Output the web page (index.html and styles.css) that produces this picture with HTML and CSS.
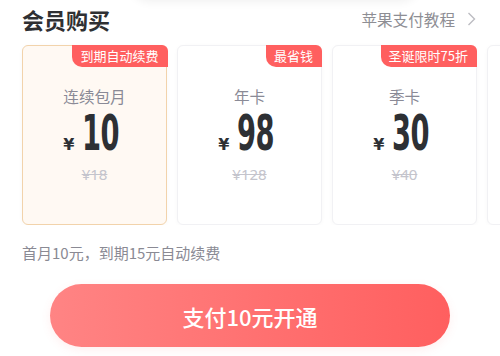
FILE: index.html
```html
<!DOCTYPE html>
<html lang="zh-CN">
<head>
    <meta charset="UTF-8">
    <meta name="viewport" content="width=device-width, initial-scale=1.0">
    <title>会员购买</title>
    <link rel="stylesheet" href="styles.css">
</head>
<body>

<div class="sheet">
    <div class="top-shade"></div>

    <div class="header">
        <h2 class="title">会员购买</h2>
        <a class="guide" href="#">苹果支付教程
            <svg class="chevron" width="9" height="14" viewBox="0 0 9 14">
                <path d="M1.5 1 L7.5 7 L1.5 13" fill="none" stroke="#bcbcc2" stroke-width="1.4"/>
            </svg>
        </a>
    </div>

    <div class="plans">
        <div class="plan selected">
            <span class="badge">到期自动续费</span>
            <div class="plan-name">连续包月</div>
            <div class="price"><span class="yen">¥</span><span class="num">10</span></div>
            <div class="old-price">¥18</div>
        </div>
        <div class="plan">
            <span class="badge">最省钱</span>
            <div class="plan-name">年卡</div>
            <div class="price"><span class="yen">¥</span><span class="num">98</span></div>
            <div class="old-price">¥128</div>
        </div>
        <div class="plan">
            <span class="badge">圣诞限时75折</span>
            <div class="plan-name">季卡</div>
            <div class="price"><span class="yen">¥</span><span class="num">30</span></div>
            <div class="old-price">¥40</div>
        </div>
        <div class="plan"></div>
    </div>

    <p class="note">首月10元，到期15元自动续费</p>

    <div class="pay-wrap">
        <button class="pay-btn">支付10元开通</button>
    </div>
</div>

</body>
</html>
```

FILE: styles.css
```css
body {
    margin: 0;
    background: #fff;
    font-family: "Noto Sans CJK SC", "Noto Sans", sans-serif;
}
.sheet {
    position: relative;
    width: 500px;
    height: 356px;
    overflow: hidden;
    background: #fff;
}
.top-shade {
    position: absolute;
    left: 130px;
    top: -20px;
    width: 290px;
    height: 20px;
    border-radius: 0 0 20px 20px;
    box-shadow: 0 2px 10px rgba(0, 0, 0, 0.06);
}

.header {
    display: flex;
    align-items: center;
    justify-content: space-between;
    height: 37px;
    padding: 0 24px 0 22px;
}
.title {
    margin: 0;
    font-size: 22px;
    font-weight: bold;
    color: #2f3033;
    line-height: 1;
}
.guide {
    display: flex;
    align-items: center;
    gap: 12px;
    font-size: 15.6px;
    color: #8e8e94;
    text-decoration: none;
}

.plans {
    display: flex;
    gap: 10px;
    padding: 8px 0 0 22px;
    overflow: hidden;
}
.plan {
    position: relative;
    flex-shrink: 0;
    width: 145px;
    height: 180px;
    box-sizing: border-box;
    border: 1px solid #f1f1f4;
    border-radius: 6px;
    background: #fff;
    box-shadow: 0 1px 4px rgba(0, 0, 0, 0.03);
    display: flex;
    flex-direction: column;
    align-items: center;
    padding-top: 39px;
}
.plan.selected {
    background: #fff9f3;
    border: 1.5px solid #f2d3ab;
}
.badge {
    position: absolute;
    top: -1px;
    right: -1px;
    height: 22px;
    line-height: 22px;
    padding: 0 9px 0 8px;
    background: #ff5f5f;
    color: #fff;
    font-size: 13px;
    border-radius: 0 6px 0 10px;
}
.plan.selected .badge {
    top: -1.5px;
    right: -1.5px;
}
.plan-name {
    font-size: 15.6px;
    color: #8a8a96;
    line-height: 22px;
}
.price {
    display: flex;
    align-items: baseline;
    margin-top: 2px;
    height: 50px;
    margin-right: 8px;
}
.yen {
    font-family: "DejaVu Sans", sans-serif;
    font-size: 16px;
    font-weight: bold;
    color: #2d3034;
    margin-right: 8px;
}
.num {
    display: inline-block;
    font-family: "DejaVu Sans Condensed", "DejaVu Sans", sans-serif;
    font-stretch: condensed;
    font-size: 49px;
    font-weight: bold;
    color: #2d3034;
    line-height: 50px;
    letter-spacing: -1px;
    transform: scaleX(0.62);
    transform-origin: left center;
    margin-right: -24px;
}
.old-price {
    margin-top: 5px;
    font-size: 15px;
    color: #c4c4cc;
    text-decoration: line-through;
    font-family: "Noto Sans", sans-serif;
}

.note {
    margin: 17px 0 0 22px;
    font-size: 15px;
    color: #8a8a94;
}

.pay-wrap {
    display: flex;
    justify-content: center;
    margin-top: 21px;
}
.pay-btn {
    width: 400px;
    height: 63px;
    border: none;
    border-radius: 32px;
    background: linear-gradient(90deg, #ff8484, #ff5f5f);
    color: #fff;
    font-family: "Noto Sans CJK SC", sans-serif;
    font-size: 22px;
    font-weight: 500;
    box-shadow: 0 3px 10px rgba(255, 120, 120, 0.12);
}
```
